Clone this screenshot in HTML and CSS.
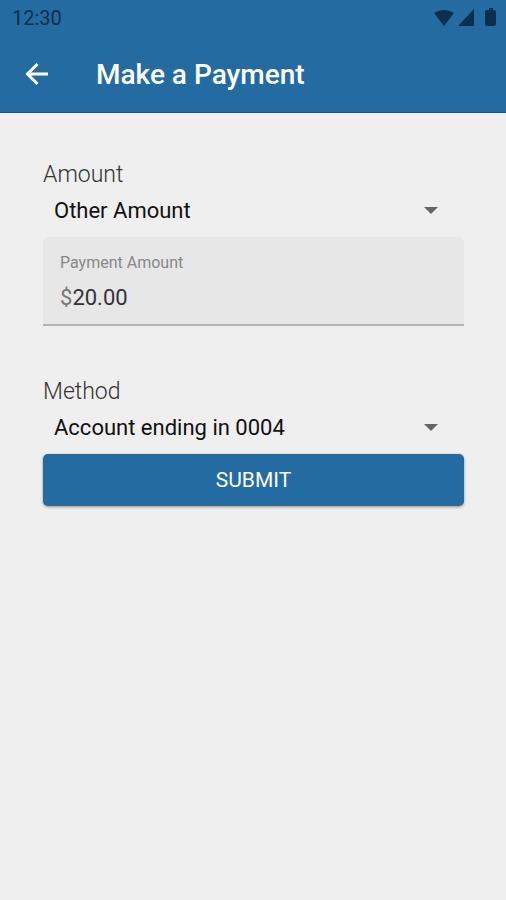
FILE: index.html
```html
<!DOCTYPE html>
<html lang="en">
<head>
  <meta charset="utf-8">
  <meta name="viewport" content="width=device-width, initial-scale=1">
  <title>Make a Payment</title>
  <link rel="stylesheet" href="styles.css">
</head>
<body>
  <header class="app-header">
    <div class="status-bar">
      <span>12:30</span>
      <svg class="status-icons" width="64" height="20" viewBox="0 0 64 20" fill="currentColor" aria-hidden="true">
        <path d="M0 5Q10-1 20 5L10 18Z"/>
        <path d="M40 1V18H24Z"/>
        <path d="M53 2H55V0H59V2H60Q62 2 62 4V16Q62 18 60 18H53Q51 18 51 16V4Q51 2 53 2Z"/>
      </svg>
    </div>
    <div class="toolbar">
      <button class="back" type="button" aria-label="Back">
        <svg width="24" height="24" viewBox="0 0 24 24" fill="none" stroke="currentColor" stroke-width="3" aria-hidden="true">
          <path d="M23 12H3M12.500 2L2.500 12L12.500 22"/>
        </svg>
      </button>
      <h1 class="title">Make a Payment</h1>
    </div>
  </header>
  <main>
    <form class="payment-form">
      <section class="group">
        <label class="group-label" for="amount-type">Amount</label>
        <div class="picker">
          <select id="amount-type"><option>Other Amount</option></select>
          <svg class="caret" width="14" height="8" viewBox="0 0 14 8" aria-hidden="true"><path d="M0 0H14L7 7Z" fill="currentColor"/></svg>
        </div>
        <div class="field">
          <label class="field-label" for="payment-amount">Payment Amount</label>
          <div class="field-value">
            <span class="currency">$</span>
            <input id="payment-amount" type="text" inputmode="decimal" value="20.00">
          </div>
        </div>
      </section>
      <section class="group">
        <label class="group-label" for="method">Method</label>
        <div class="picker">
          <select id="method"><option>Account ending in 0004</option></select>
          <svg class="caret" width="14" height="8" viewBox="0 0 14 8" aria-hidden="true"><path d="M0 0H14L7 7Z" fill="currentColor"/></svg>
        </div>
        <button class="submit" type="button">SUBMIT</button>
      </section>
    </form>
  </main>
</body>
</html>
```
FILE: styles.css
```css
* {
  box-sizing: border-box;
}

body {
  margin: 0;
  background: #efefef;
  color: #111;
  font-family: Roboto, "Liberation Sans", sans-serif;
  font-size: 22px;
  line-height: 28px;
}

button,
input,
select {
  margin: 0;
  padding: 0;
  border: 0;
  background: none;
  color: inherit;
  font: inherit;
}

.app-header {
  background: #246ba1;
  border-bottom: 1px solid #14568c;
  color: #fff;
}

.status-bar {
  display: flex;
  align-items: center;
  justify-content: space-between;
  height: 36px;
  padding: 0 8px 0 12px;
  color: #0d2f4b;
  font-size: 20px;
}

.toolbar {
  display: flex;
  align-items: center;
  gap: 47px;
  height: 76px;
  padding: 2px 25px 0;
}

.back {
  display: flex;
  padding-bottom: 2px;
}

.title {
  margin: 0;
  font-size: 28px;
  font-weight: 500;
  line-height: 36px;
}

.payment-form {
  display: flex;
  flex-direction: column;
  gap: 52px;
  padding: 48px 42px 48px 43px;
}

.group {
  display: flex;
  flex-direction: column;
}

.group-label {
  color: #333;
  font-size: 23px;
  font-weight: 300;
}

.picker {
  display: flex;
  align-items: center;
  height: 44px;
  margin-bottom: 4px;
  padding: 0 26px 0 11px;
}

.picker select {
  flex: 1;
  min-width: 0;
  appearance: none;
  height: 44px;
}

.caret {
  color: #666;
}

.field {
  padding: 12px 17px;
  background: #e7e7e7;
  border-bottom: 2px solid #b4b4b4;
  border-radius: 6px 6px 0 0;
}

.field-label {
  display: block;
  color: #888;
  font-size: 16px;
}

.field-value {
  display: flex;
  margin-top: 7px;
  color: #333;
}

.currency {
  color: #777;
}

.field-value input {
  flex: 1;
  min-width: 0;
  height: 28px;
}

.submit {
  height: 52px;
  border-radius: 5px;
  background: #246ba1;
  box-shadow: 0 1px 3px #00000066;
  color: #fff;
  font-size: 21px;
}
```
